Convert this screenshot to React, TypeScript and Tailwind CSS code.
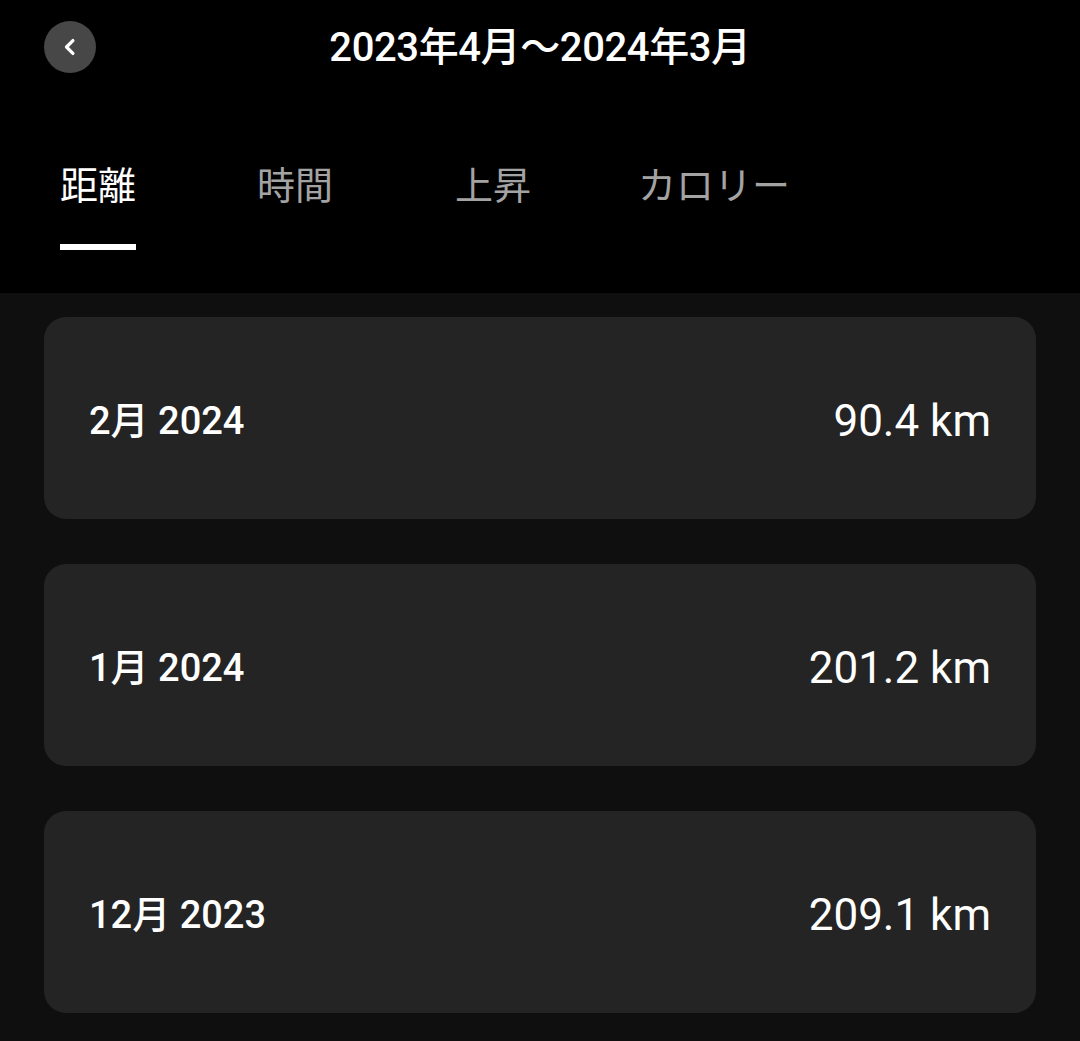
import React, { useState } from 'react';

const tabs = [
  { label: '距離', gap: 'mr-[121px]' },
  { label: '時間', gap: 'mr-[122px]' },
  { label: '上昇', gap: 'mr-[107px]' },
  { label: 'カロリー', gap: '' },
];

const rows = [
  { month: '2月 2024', value: '90.4 km' },
  { month: '1月 2024', value: '201.2 km' },
  { month: '12月 2023', value: '209.1 km' },
];

const font = "font-['Roboto','Noto_Sans_CJK_JP',sans-serif]";

const App: React.FC = () => {
  const [active, setActive] = useState(0);

  return (
    <div className={`min-h-[1041px] w-[1080px] bg-[#0f0f0f] text-white ${font}`}>
      <div className="h-[293px] bg-black">
        <div className="relative flex h-[95px] items-center justify-center">
          <button
            type="button"
            className="absolute left-[44px] top-[21px] flex h-[52px] w-[52px] items-center justify-center rounded-full bg-[#474747]"
          >
            <svg className="h-[28px] w-[28px]" viewBox="0 0 24 24" fill="none" stroke="currentColor" strokeWidth={2.8} strokeLinecap="round" strokeLinejoin="round">
              <path d="M14.5 6.5L9 12l5.5 5.5" />
            </svg>
          </button>
          <h1 className="text-[40px] font-medium leading-none tracking-[-0.4px]">2023年4月～2024年3月</h1>
        </div>

        <div className="flex pl-[60px] pt-[72px]">
          {tabs.map((t, i) => (
            <button
              key={t.label}
              type="button"
              onClick={() => setActive(i)}
              className={`${t.gap} flex flex-col items-start text-[38px] leading-none ${i === active ? 'text-white' : 'text-[#a3a3a3]'}`}
            >
              <span>{t.label}</span>
              <span className={`mt-[39px] h-[6px] w-full ${i === active ? 'bg-white' : 'bg-transparent'}`} />
            </button>
          ))}
        </div>
      </div>

      <div className="flex flex-col gap-[45px] px-[44px] pt-[24px]">
        {rows.map(r => (
          <div key={r.month} className="flex h-[202px] items-center justify-between rounded-[22px] bg-[#242424] px-[45px] pt-[6px]">
            <span className="text-[38px] font-medium">{r.month}</span>
            <span className="text-[44px]">{r.value}</span>
          </div>
        ))}
      </div>
    </div>
  );
};

export default App;
